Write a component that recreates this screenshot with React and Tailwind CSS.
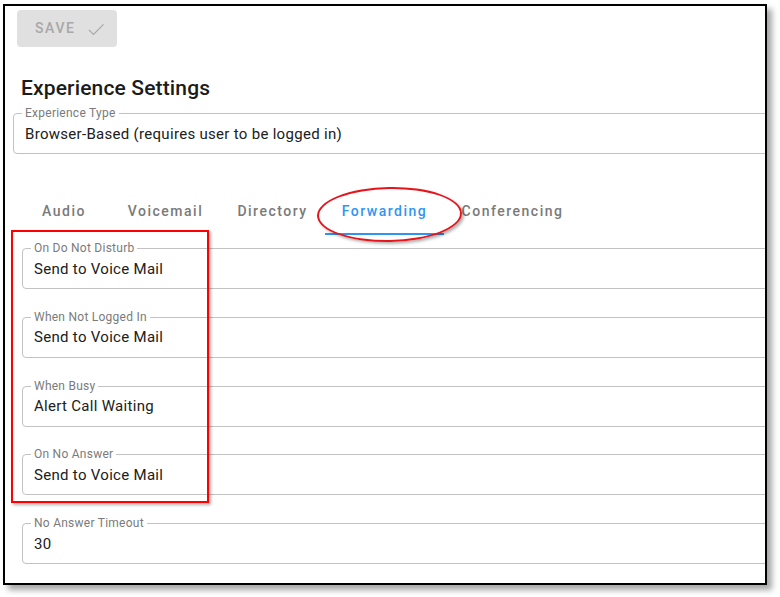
import React from "react";

const font = { fontFamily: "Roboto, 'Noto Sans', Arial, sans-serif" };

function Field({ label, value, className = "" }) {
  return (
    <div
      className={`relative flex h-[41px] w-[900px] items-center rounded-[4px] border border-[#c2c2c2] pl-[11px] ${className}`}
    >
      <span className="absolute -top-[7px] left-[8px] bg-white px-[3px] text-[12px] leading-[12px] tracking-[0.25px] text-[#7b7b7b]">
        {label}
      </span>
      <span className="text-[15px] leading-[20px] tracking-[0.3px] text-[#202020]">{value}</span>
    </div>
  );
}

const tabs = [
  { name: "Audio", w: "w-[94px]" },
  { name: "Voicemail", w: "w-[109px]" },
  { name: "Directory", w: "w-[105px]" },
  { name: "Forwarding", w: "w-[119px]", active: true },
  { name: "Conferencing", w: "w-[137px]" },
];

const fields = [
  ["On Do Not Disturb", "Send to Voice Mail"],
  ["When Not Logged In", "Send to Voice Mail"],
  ["When Busy", "Alert Call Waiting"],
  ["On No Answer", "Send to Voice Mail"],
  ["No Answer Timeout", "30"],
];

export default function App() {
  return (
    <div className="h-[597px] w-[780px] bg-white pl-[3px] pt-[4px]" style={font}>
      <div className="relative h-[581px] w-[764px] overflow-hidden border-2 border-black bg-white shadow-[5px_5px_6px_rgba(0,0,0,0.35)]">
        <div className="flex flex-col">
          <div className="pl-[12px] pt-[4px]">
            <div className="flex h-[37px] w-[100px] items-center rounded-[4px] bg-[#e0e0e0] pl-[18px]">
              <span className="text-[14px] font-medium tracking-[1.6px] text-[#a8a8a8]">SAVE</span>
              <svg className="ml-[10px]" width="20" height="20" viewBox="0 0 24 24" fill="none" stroke="#a8a8a8" strokeWidth="1.5">
                <path d="M3.5 13l5.5 5.5L21 6.5" />
              </svg>
            </div>
          </div>

          <h1 className="mt-[27px] pl-[16px] text-[21px] font-medium leading-[28px] tracking-[0.15px] text-[#1b1b1b]">
            Experience Settings
          </h1>

          <div className="mt-[11px] pl-[8px]">
            <Field label="Experience Type" value="Browser-Based (requires user to be logged in)" />
          </div>

          <div className="mt-[33px] flex h-[48px] pl-[12px]">
            {tabs.map((t) => (
              <div
                key={t.name}
                className={`relative flex h-[48px] items-center justify-center ${t.w}`}
              >
                <span
                  className={`text-[14px] font-medium tracking-[1.5px] ${
                    t.active ? "text-[#2f95f3]" : "text-[#7a7a7a]"
                  }`}
                >
                  {t.name}
                </span>
                {t.active && (
                  <span className="absolute bottom-0 left-0 h-[2px] w-full bg-[#2f95f3]" />
                )}
              </div>
            ))}
          </div>

          <div className="mt-[13px] flex flex-col gap-[27.75px] pl-[17px]">
            {fields.map(([l, v]) => (
              <Field key={l} label={l} value={v} />
            ))}
          </div>
        </div>

        {/* annotations */}
        <div className="absolute left-[6px] top-[224px] h-[273px] w-[198px] border-2 border-[#ff0000] shadow-[2px_2px_3px_rgba(0,0,0,0.3)]" />
        <div className="absolute left-[312px] top-[181px] h-[55px] w-[145px] -rotate-1 rounded-[50%] border-2 border-[#e8141b] shadow-[2px_2px_3px_rgba(0,0,0,0.3)]" />
      </div>
    </div>
  );
}
